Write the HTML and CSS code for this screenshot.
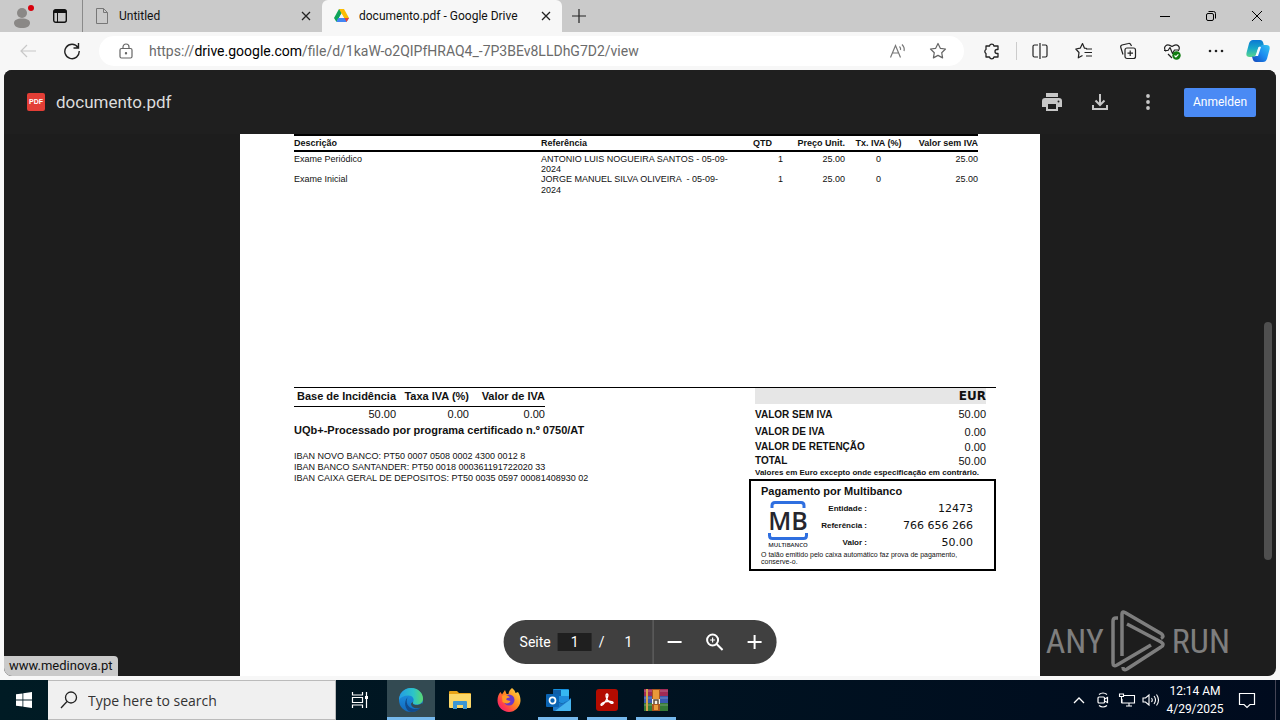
FILE: index.html
```html
<!DOCTYPE html>
<html lang="en">
<head>
  <meta charset="UTF-8">
  <meta name="viewport" content="width=device-width, initial-scale=1.0">
  <title>documento.pdf - Google Drive</title>
  <link rel="stylesheet" href="styles.css">
</head>
<body>
  <header class="tabs">
    <button class="profile" aria-label="Profile"><svg width="24" height="28" viewBox="0 0 24 28"><circle cx="12" cy="11" r="5" fill="#8a8886"/><path d="M4 21c0-3 3-4.500 8-4.500s8 1.500 8 4.500-3 5-8 5-8-2-8-5z" fill="#8a8886"/><circle cx="21" cy="6" r="3" fill="#d8000c"/></svg></button>
    <button class="tab-actions" aria-label="Tab actions"><svg width="16" height="16" viewBox="0 0 16 16"><rect x="1.700" y="1.700" width="12.600" height="12.600" rx="2" fill="none" stroke="#111" stroke-width="1.400"/><path d="M1.700 5V3.500a2 2 0 0 1 2-2h8.600a2 2 0 0 1 2 2V5z" fill="#111"/><path d="M5.500 5v9" stroke="#111"/></svg></button>
    <div class="tab">
      <svg width="14" height="16" viewBox="0 0 14 16" fill="none" stroke="#777"><path d="M1.500 .5h7l4 4v11h-11z M8.500 .5v4h4"/></svg>
      <span>Untitled</span>
      <button class="close" aria-label="Close tab"><svg width="10" height="10" viewBox="0 0 10 10" stroke="#222" stroke-width="1.300"><path d="M1 1l8 8M9 1L1 9"/></svg></button>
    </div>
    <div class="tab active">
      <svg width="15" height="14" viewBox="0 0 15 14"><path d="M5 0h5L5 9l-2.500 4L0 9z" fill="#0fa45a"/><path d="M5 0h5l5 9h-5z" fill="#fbbc04"/><path d="M4 9h11l-2.500 4h-10z" fill="#4285f4"/><path d="M10.500 9H15l-2.500 4z" fill="#ea4335"/><path d="M7.500 4.500L10 9H5z" fill="#f7f7f7"/></svg>
      <span>documento.pdf - Google Drive</span>
      <button class="close" aria-label="Close tab"><svg width="10" height="10" viewBox="0 0 10 10" stroke="#222" stroke-width="1.300"><path d="M1 1l8 8M9 1L1 9"/></svg></button>
    </div>
    <button class="new-tab" aria-label="New tab"><svg width="14" height="14" viewBox="0 0 14 14" stroke="#222" stroke-width="1.200"><path d="M7 0v14M0 7h14"/></svg></button>
    <div class="window-buttons">
      <button aria-label="Minimize"><svg width="12" height="12" viewBox="0 0 12 12"><path d="M1 6.500h10" stroke="#000"/></svg></button>
      <button aria-label="Restore"><svg width="12" height="12" viewBox="0 0 12 12" fill="none" stroke="#000"><rect x="1.500" y="3.500" width="7" height="7" rx="1.500"/><path d="M3.500 1.500h5a2 2 0 0 1 2 2v5"/></svg></button>
      <button aria-label="Close"><svg width="12" height="12" viewBox="0 0 12 12" stroke="#000"><path d="M1 1l10 10M11 1L1 11"/></svg></button>
    </div>
  </header>

  <nav class="toolbar">
    <button class="tool" aria-label="Back"><svg width="18" height="16" viewBox="0 0 18 16" fill="none" stroke="#c8c8c8" stroke-width="1.200"><path d="M17 8H2M8 2L2 8l6 6"/></svg></button>
    <button class="tool" aria-label="Refresh"><svg width="18" height="18" viewBox="0 0 18 18" fill="none" stroke="#222" stroke-width="1.400"><path d="M15 5.500A7.200 7.200 0 1 0 16.200 9M15.500 1v5h-5"/></svg></button>
    <div class="address">
      <svg width="14" height="16" viewBox="0 0 14 16" fill="none" stroke="#666" stroke-width="1.200"><rect x="1" y="5.500" width="12" height="9.500" rx="1.500"/><path d="M4 5.500V4a3 3 0 0 1 6 0v1.500"/><circle cx="7" cy="10.200" r=".6" fill="#666"/></svg>
      <a class="url" href="#">https://<b>drive.google.com</b>/file/d/1kaW-o2QIPfHRAQ4_-7P3BEv8LLDhG7D2/view</a>
      <button aria-label="Read aloud"><svg width="18" height="16" viewBox="0 0 18 16" fill="none" stroke="#777" stroke-width="1.200"><path d="M1.500 14.500l5-12 5 12M3.500 10h6M10.500 3.500q1.500 1.500 1 3.500M13 1.500q3 3 2 6.500"/></svg></button>
      <button aria-label="Add to favorites"><svg width="18" height="18" viewBox="0 0 18 18" fill="none" stroke="#666" stroke-width="1.200"><path d="M9 1.500l2.300 4.800 5.200.7-3.800 3.700.9 5.200L9 13.400l-4.600 2.500.9-5.200L1.500 7l5.200-.7z" stroke-linejoin="round"/></svg></button>
    </div>
    <button class="tool" aria-label="Extensions"><svg width="18" height="18" viewBox="0 0 18 18" fill="none" stroke="#222" stroke-width="1.300"><path d="M3 4h3.500a2.300 2.300 0 0 1 4.500 0h4v3.500h-1a2 2 0 0 0 0 4h1V15h-4a2.300 2.300 0 0 1-4.500 0H3v-3.500a2.300 2.300 0 0 1 0-4z" stroke-linejoin="round"/></svg></button>
    <i class="divider"></i>
    <button class="tool" aria-label="Split screen"><svg width="18" height="18" viewBox="0 0 18 18" fill="none" stroke="#222" stroke-width="1.200"><path d="M7 3H3.500A1.500 1.500 0 0 0 2 4.500v9A1.500 1.500 0 0 0 3.500 15H7M11 3h3.500A1.500 1.500 0 0 1 16 4.500v9a1.500 1.500 0 0 1-1.500 1.500H11M9 1v16"/></svg></button>
    <button class="tool" aria-label="Favorites"><svg width="18" height="18" viewBox="0 0 18 18" fill="none" stroke="#222" stroke-width="1.200"><path d="M12 6.500l-2.500-.3L7.500 1.500 5.200 6.200.8 7l3.200 3.500-.7 5.300 4.200-2.300M11 7h6M9.500 10.500H17M11 14h6" stroke-linejoin="round"/></svg></button>
    <button class="tool" aria-label="Collections"><svg width="18" height="18" viewBox="0 0 18 18" fill="none" stroke="#222" stroke-width="1.200"><rect x="6" y="6" width="10.500" height="10.500" rx="2"/><path d="M11.200 8.500v5.500M8.500 11.200H14M4 12.500L1.800 5.500A2 2 0 0 1 3 3l6.500-1.500A2 2 0 0 1 12 3l.5 1"/></svg></button>
    <button class="tool" aria-label="Browser essentials"><svg width="18" height="18" viewBox="0 0 18 18" fill="none" stroke="#222" stroke-width="1.200"><path d="M3 9.500C-.5 5 3.500.5 9 4.500c5.500-4 9 .5 6.200 4.500M5 12l4 4M1 8.500h4l2-3 2.500 6 2-3.500H15" stroke-linejoin="round"/><circle cx="13.500" cy="13.500" r="4.200" fill="#107c10" stroke="none"/><path d="M11.500 13.500l1.400 1.400 2.500-2.600" stroke="#fff"/></svg></button>
    <button class="tool" aria-label="Settings and more"><svg width="16" height="4" viewBox="0 0 16 4" fill="#222"><circle cx="2" cy="2" r="1.300"/><circle cx="8" cy="2" r="1.300"/><circle cx="14" cy="2" r="1.300"/></svg></button>
    <button class="tool copilot" aria-label="Copilot"><svg width="24" height="24" viewBox="0 0 24 24"><defs><linearGradient id="cpA" x1="0" y1="0" x2="0" y2="1"><stop offset="0" stop-color="#0a78d4"/><stop offset=".5" stop-color="#18a8c8"/><stop offset="1" stop-color="#5ad68c"/></linearGradient><linearGradient id="cpB" x1="1" y1="0" x2="0" y2="1"><stop offset="0" stop-color="#35c5f0"/><stop offset=".5" stop-color="#1a8af0"/><stop offset="1" stop-color="#1545b8"/></linearGradient></defs><path d="M7 1h7q2.500 0 3.300 3L18 7h-3q-2 0-3 3l-1.500 5Q9.500 18 7 18H3.500Q-.5 18 .6 13.500L3 4.500Q4 1 7 1z" fill="url(#cpA)"/><path d="M17 6h3.500q4 0 3 4.500l-2.400 9Q20 23 17 23h-7q-2.500 0-3.300-3L6 17.500h2q2.500 0 3.500-3L13 9.500Q14 6 17 6z" fill="url(#cpB)"/><path d="M12.500 8h2.500l-3 9H9.500z" fill="#f4faff"/></svg></button>
  </nav>

  <main class="viewer">
    <div class="viewer-head">
      <span class="pdf-badge">PDF</span>
      <h1>documento.pdf</h1>
      <button aria-label="Drucken"><svg width="20" height="18" viewBox="0 0 20 18"><path d="M4 0h12v4H4zM3 5h14a3 3 0 0 1 3 3v6h-4v4H4v-4H0V8a3 3 0 0 1 3-3z" fill="#c7c7c7"/><path d="M6 11h8v5H6z" fill="#1f1f1f"/><circle cx="16.500" cy="8.500" r="1" fill="#1f1f1f"/></svg></button>
      <button aria-label="Herunterladen"><svg width="16" height="16" viewBox="0 0 16 16" fill="none" stroke="#c7c7c7" stroke-width="2"><path d="M8 0v11M3.500 6.500L8 11l4.500-4.500M1 11v4h14v-4"/></svg></button>
      <button aria-label="Mehr"><svg width="4" height="16" viewBox="0 0 4 16" fill="#c7c7c7"><circle cx="2" cy="2" r="1.900"/><circle cx="2" cy="8" r="1.900"/><circle cx="2" cy="14" r="1.900"/></svg></button>
      <a class="sign-in" href="#">Anmelden</a>
    </div>

    <article class="page">
      <table class="items">
        <thead>
          <tr><th class="desc">Descrição</th><th class="ref">Referência</th><th class="qty">QTD</th><th class="price">Preço Unit.</th><th class="rate">Tx. IVA (%)</th><th class="total">Valor sem IVA</th></tr>
        </thead>
        <tbody>
          <tr><td>Exame Periódico</td><td>ANTONIO LUIS NOGUEIRA SANTOS - 05-09-<br>2024</td><td class="qty">1</td><td class="price">25.00</td><td class="rate">0</td><td class="total">25.00</td></tr>
          <tr><td>Exame Inicial</td><td>JORGE MANUEL SILVA OLIVEIRA &nbsp;- 05-09-<br>2024</td><td class="qty">1</td><td class="price">25.00</td><td class="rate">0</td><td class="total">25.00</td></tr>
        </tbody>
      </table>

      <section class="summary">
        <div class="left">
          <table class="vat">
            <thead><tr><th class="base">Base de Incidência</th><th class="tax">Taxa IVA (%)</th><th>Valor de IVA</th></tr></thead>
            <tbody><tr><td>50.00</td><td>0.00</td><td>0.00</td></tr></tbody>
          </table>
          <p class="certified">UQb+-Processado por programa certificado n.º 0750/AT</p>
          <p class="iban">IBAN NOVO BANCO: PT50 0007 0508 0002 4300 0012 8<br>IBAN BANCO SANTANDER: PT50 0018 000361191722020 33<br>IBAN CAIXA GERAL DE DEPOSITOS: PT50 0035 0597 00081408930 02</p>
        </div>
        <div class="right">
          <table class="totals">
            <thead><tr><th colspan="2">EUR</th></tr></thead>
            <tbody>
              <tr><th>VALOR SEM IVA</th><td>50.00</td></tr>
              <tr><th>VALOR DE IVA</th><td>0.00</td></tr>
              <tr><th>VALOR DE RETENÇÃO</th><td>0.00</td></tr>
              <tr><th>TOTAL</th><td>50.00</td></tr>
            </tbody>
          </table>
          <p class="note">Valores em Euro excepto onde especificação em contrário.</p>
          <div class="payment">
            <h2>Pagamento por Multibanco</h2>
            <div class="payment-body">
              <div class="mb">
                <svg width="40" height="7" viewBox="0 0 40 7" fill="none" stroke="#2f6fe0" stroke-width="3"><path d="M4 7V4.500q0-3 3-3h26q3 0 3 3V7"/></svg>
                <b>MB</b>
                <svg width="40" height="7" viewBox="0 0 40 7" fill="none" stroke="#2f6fe0" stroke-width="3"><path d="M1.500 0v2.500q0 3 3 3h31q3 0 3-3V0"/></svg>
                <small>MULTIBANCO</small>
              </div>
              <dl>
                <dt>Entidade :</dt><dd>12473</dd>
                <dt>Referência :</dt><dd>766 656 266</dd>
                <dt>Valor :</dt><dd>50.00</dd>
              </dl>
            </div>
            <p class="receipt">O talão emitido pelo caixa automático faz prova de pagamento,<br>conserve-o.</p>
          </div>
        </div>
      </section>
    </article>

    <i class="scroll-thumb"></i>

    <div class="pager">
      <label for="pageno">Seite</label>
      <input id="pageno" type="text" value="1">
      <span>/</span><span class="count">1</span>
      <i></i>
      <button aria-label="Verkleinern"><svg width="16" height="16" viewBox="0 0 16 16" stroke="#fff" stroke-width="2"><path d="M1 8h14"/></svg></button>
      <button aria-label="Zoom"><svg width="18" height="18" viewBox="0 0 18 18" fill="none" stroke="#fff" stroke-width="2"><circle cx="7" cy="7" r="5.500"/><path d="M11 11l6 6"/><path d="M7 4.500v5M4.500 7h5" stroke-width="1.200"/></svg></button>
      <button aria-label="Vergrößern"><svg width="16" height="16" viewBox="0 0 16 16" stroke="#fff" stroke-width="2"><path d="M1 8h14M8 1v14"/></svg></button>
    </div>

    <div class="status">www.medinova.pt</div>

    <div class="watermark">
      <span>ANY</span>
      <svg width="56" height="62" viewBox="0 0 56 62" fill="none" stroke="currentColor" stroke-width="3.500" stroke-linejoin="round"><path d="M8 8H6q-3 0-3 3v42q0 4 4 2l34-20M12 46V4q0-3 3-1.500l36 21q4 3 0 5M17 14l34 18q4 3 0 5L17 59q-4 2-4-2"/></svg>
      <span>RUN</span>
    </div>
  </main>

  <footer class="taskbar">
    <button class="start" aria-label="Start"><svg width="16" height="16" viewBox="0 0 16 16" fill="#fff"><path d="M0 2.300l6.500-.9v6.200H0zM7.300 1.300L16 0v7.600H7.300zM0 8.400h6.500v6.200L0 13.700zM7.300 8.400H16V16l-8.700-1.300z"/></svg></button>
    <label class="search"><svg width="18" height="18" viewBox="0 0 18 18" fill="none" stroke="#222" stroke-width="1.300"><circle cx="11" cy="6.500" r="5.500"/><path d="M7 10.500L1 17"/></svg><input type="text" placeholder="Type here to search"></label>
    <button class="start task-view" aria-label="Task View"><svg width="18" height="18" viewBox="0 0 18 18" fill="none" stroke="#fff" stroke-width="1.200"><path d="M1.500 1v3h10V1M1.500 17v-3h10v3M1.500 6.500h10v5h-10zM15.500 1v16"/><path d="M14 5h3v3h-3z" fill="#fff" stroke="none"/></svg></button>
    <div class="apps">
      <button class="focused" aria-label="Edge"><svg width="24" height="24" viewBox="0 0 24 24"><defs><linearGradient id="edA" x1="0" y1="0" x2="1" y2="0"><stop offset="0" stop-color="#239be5"/><stop offset=".6" stop-color="#2cc4c8"/><stop offset="1" stop-color="#5ad870"/></linearGradient><linearGradient id="edB" x1="0" y1="0" x2="0" y2="1"><stop offset="0" stop-color="#1f9ae8"/><stop offset="1" stop-color="#1269bd"/></linearGradient></defs><circle cx="12" cy="12" r="12" fill="url(#edB)"/><path d="M0 11C1 4 6 0 12 0c7 0 12 5 12 10.500 0 4-3 6-6.500 6-3 0-4.500-1-3.500-2.500 2-3-.5-6.500-4.500-6.500C5 7.500 1.500 9 0 12z" fill="url(#edA)"/><path d="M9 9c-3 4-1 11 6 12 3 .4 5-.5 7-2-2 3-5.500 5-10 5C6 23 4 13 9 9z" fill="#124c8d"/><path d="M14.500 13.500c-1.500 2 0 3.500 3 3.500 2 0 4-.5 5.500-2l1 2-2 2.500c-5 2-10 0-10-4z" fill="#344a52"/></svg></button>
      <button aria-label="File Explorer"><svg width="22" height="20" viewBox="0 0 22 20"><path d="M0 2q0-1 1-1h7l2 2h11q1 0 1 1v4H0z" fill="#e8a317"/><path d="M0 4h22v13q0 1-1 1H1q-1 0-1-1z" fill="#fbd768"/><path d="M4 12q0-1 1-1h12q1 0 1 1v7h-4v-4H8v4H4z" fill="#3c96d4"/></svg></button>
      <button aria-label="Firefox"><svg width="24" height="24" viewBox="0 0 24 24"><defs><linearGradient id="fx" x1="1" y1="0" x2="0" y2="1"><stop offset="0" stop-color="#ffe34c"/><stop offset=".45" stop-color="#ff8a1e"/><stop offset=".75" stop-color="#ff3750"/><stop offset="1" stop-color="#e01890"/></linearGradient></defs><path d="M15 0c2 1.500 3 3 3.500 5L21 4c2 3 2.500 6 2.500 9C23 19 18 24 12 24S.5 19 .5 12.500C.5 9 1.500 6 3.500 4L5 6.500 8 2l1.500 4h2C12 3 13 1.500 15 0z" fill="url(#fx)"/><circle cx="12" cy="12" r="5.500" fill="#6a38c8"/><path d="M5 8c3-2 6-1 8 1.500-3 0-4 1-3.500 2.500l4 1c-1 3-5 3-8 1z" fill="#ff9a24"/></svg></button>
      <button class="open" aria-label="Outlook"><svg width="25" height="22" viewBox="0 0 25 22"><path d="M8 0h14q1 0 1 1v11H7V1q0-1 1-1z" fill="#1490df"/><path d="M7 1h8v6H7z" fill="#0f5fa8"/><path d="M15 1h8v6h-8z" fill="#35b8f1"/><path d="M7 9l9 6 9-6v12q0 1-1 1H8q-1 0-1-1z" fill="#1c78ca"/><path d="M25 10v11q0 1-1 1H9z" fill="#47b5ef"/><path d="M15 7h8v4l-7 4-3-2V7z" fill="#1f8ddb"/><rect y="5" width="13" height="13" rx="1" fill="#0a64b4"/><ellipse cx="6.500" cy="11.500" rx="3" ry="3.200" fill="none" stroke="#fff" stroke-width="1.700"/></svg></button>
      <button class="open" aria-label="Acrobat"><svg width="22" height="22" viewBox="0 0 22 22"><rect width="22" height="22" rx="3" fill="#b30b00"/><path d="M11 5c1.500 0 1 3-1 6.500S5.500 17 5 16s2-2.800 6-3.500 6.500.5 6 1.500-4-.5-5.500-3S9.500 5 11 5z" fill="none" stroke="#fff" stroke-width="1.400"/></svg></button>
      <button class="open" aria-label="WinRAR"><svg width="24" height="22" viewBox="0 0 24 22"><path d="M0 0h24v7H0z" fill="#a02a55"/><path d="M0 7h24v7H0z" fill="#3859b0"/><path d="M0 14h24v8H0z" fill="#357a37"/><path d="M0 2h24M0 9h24M0 16h24" stroke="#ffffff" stroke-opacity=".3"/><path d="M3 0v22" stroke="#d4a44c" stroke-width="2"/><path d="M8 0h8v22H8z" fill="#a9561e"/><path d="M9 1h6v9H9zM10 16h4v5h-4z" fill="#e89a3a"/><path d="M8 10h8v5H8z" fill="#f4f0e6"/><path d="M10 15v-4h4v4" fill="none" stroke="#5b4a3a" stroke-width="1.500"/></svg></button>
    </div>
    <div class="tray">
      <button aria-label="Show hidden icons"><svg width="12" height="8" viewBox="0 0 12 8" fill="none" stroke="#fff" stroke-width="1.300"><path d="M1 7l5-5 5 5"/></svg></button>
      <button aria-label="Meet Now"><svg width="14" height="16" viewBox="0 0 14 16" fill="none" stroke="#fff" stroke-width="1.200"><rect x="2" y="5" width="6.500" height="6" rx="1"/><path d="M8.500 7l3-1.500v5L8.500 9M3 2.500q4-3 8 0M3 13.500q4 3 8 0"/></svg></button>
      <button aria-label="Network"><svg width="18" height="14" viewBox="0 0 18 14" fill="none" stroke="#fff" stroke-width="1.100"><path d="M6 2.500h10.500v7.500H4V6M8 13h6M11 10v3M1.500 1v2.500h4V1zM3.500 3.500V10"/></svg></button>
      <button aria-label="Volume"><svg width="18" height="14" viewBox="0 0 18 14" fill="none" stroke="#fff" stroke-width="1.100"><path d="M1 5v4h2.500L7 12V2L3.500 5zM9.500 5q1.500 2 0 4M12 3q3 4 0 8M14.500 1.500q4 5.500 0 11"/></svg></button>
      <time>12:14 AM<br>4/29/2025</time>
      <button class="notify" aria-label="Notifications"><svg width="18" height="18" viewBox="0 0 18 18" fill="none" stroke="#fff" stroke-width="1.200"><path d="M1.500 2.500h15v11H12l-3 3-3-3H1.500z"/></svg></button>
    </div>
  </footer>
</body>
</html>
```

FILE: styles.css
```css
* { box-sizing: border-box; }
body { margin: 0; height: 100vh; display: flex; flex-direction: column; overflow: hidden; background: #f7f7f7; font-family: "Open Sans", "Noto Sans", sans-serif; }
button { border: none; background: none; padding: 0; margin: 0; display: flex; align-items: center; justify-content: center; }
svg { flex: none; display: block; }
p, h1, h2, dl, dd { margin: 0; }
table { border-collapse: collapse; }
th, td { padding: 0; }

/* tab strip */
.tabs { flex: none; height: 32px; display: flex; align-items: stretch; background: #cacaca; font: 12px Roboto, sans-serif; color: #111; }
.profile { width: 44px; }
.tab-actions { width: 32px; margin-right: 6px; }
.tab { width: 240px; padding: 0 11px 0 12px; display: flex; align-items: center; gap: 10px; border-left: 1px solid #8a8a8a; }
.tab span { flex: 1; white-space: nowrap; }
.tab.active { background: #f7f7f7; border: none; border-radius: 6px 6px 0 0; }
.new-tab { width: 34px; }
.window-buttons { margin-left: auto; display: flex; }
.window-buttons button { width: 46px; }

/* toolbar */
.toolbar { flex: none; height: 38px; padding: 0 2px 0 6px; display: flex; align-items: center; }
.tool { width: 44px; height: 38px; flex: none; }
.tool.copilot { width: 40px; }
.address { flex: 1; height: 30px; margin: 0 6px 0 5px; padding: 0 6px 0 20px; display: flex; align-items: center; background: #fff; border-radius: 15px; }
.address button { width: 40px; height: 30px; }
.url { flex: 1; margin-left: 16px; font: 14px Roboto, sans-serif; color: #6b6b6b; text-decoration: none; white-space: nowrap; }
.url b { font-weight: 400; color: #000; }
.divider { width: 1px; height: 18px; margin: 0 1px 0 2px; background: #ccc; }

/* document viewer */
.viewer { position: relative; flex: 1; min-height: 0; margin: 0 4px 4px; display: flex; flex-direction: column; overflow: hidden; background: #1d1d1d; border-radius: 8px; }
.viewer-head { flex: none; height: 64px; padding: 0 20px 0 23px; display: flex; align-items: center; background: #1f1f1f; color: #dcdcdc; }
.viewer-head h1 { flex: 1; margin-left: 11px; font: 17px Roboto, sans-serif; }
.viewer-head button { width: 48px; height: 40px; }
.pdf-badge { width: 18px; height: 18px; border-radius: 2px; background: #e33e36; color: #fff; font: bold 7px/18px "Liberation Sans", sans-serif; text-align: center; }
.sign-in { width: 72px; margin-left: 12px; border-radius: 2px; background: #4a8af4; color: #fff; font: 12px/29px Roboto, sans-serif; text-align: center; text-decoration: none; }

.page { flex: 1; width: 800px; max-width: 100%; margin: 0 auto; padding: 0 44px 0 54px; background: #fff; color: #111; font-family: "Liberation Sans", Arial, sans-serif; }
.items { width: 684px; border-top: 2px solid #000; table-layout: fixed; font-size: 9px; line-height: 11px; text-align: left; }
.items thead tr { border-bottom: 2px solid #000; }
.items th { height: 16px; }
.items td { vertical-align: top; }
.items tbody tr:first-child td { padding-top: 2px; line-height: 10px; height: 21px; }
.items .desc { width: 247px; }
.items .ref { width: 204px; }
.items .qty { width: 38px; text-align: right; }
.items th.qty { padding-right: 11px; }
.items .price { width: 62px; text-align: right; }
.items .rate { width: 67px; text-align: center; }
.items .total { text-align: right; }

.summary { margin-top: 191px; display: flex; justify-content: space-between; border-top: 1px solid #000; }
.vat { width: 251px; table-layout: fixed; font-size: 11px; text-align: right; white-space: nowrap; }
.vat thead tr { border-bottom: 1px solid #000; }
.vat th { height: 18px; padding-bottom: 2px; }
.vat td { height: 15px; }
.vat .base { width: 102px; }
.vat .tax { width: 73px; }
.certified { margin-top: 3px; font-size: 11px; line-height: 12px; font-weight: bold; }
.iban { margin-top: 15px; font-size: 9px; line-height: 11px; }
.right { width: 247px; }
.totals { width: 231px; margin-left: 6px; font-size: 10px; }
.totals th { height: 15px; text-align: left; }
.totals thead th { height: 16px; background: #e6e6e6; font: bold 12px "DejaVu Sans", sans-serif; text-align: right; }
.totals td { font-size: 11px; text-align: right; }
.totals tbody tr:first-child th { height: 20px; }
.totals tbody tr:last-child th { height: 13px; }
.note { margin: 1px 0 1px 6px; font-size: 8px; line-height: 10px; font-weight: bold; white-space: nowrap; }
.payment { padding: 3px 10px 4px; border: 2px solid #000; }
.payment h2 { font-size: 11px; line-height: 14px; }
.payment-body { display: flex; gap: 10px; padding-left: 6px; }
.mb { width: 42px; display: flex; flex-direction: column; align-items: center; padding-top: 3px; }
.mb b { font: 600 25px/25px "Open Sans", sans-serif; color: #26262e; }
.mb small { font: 600 6px/11px "Open Sans", sans-serif; color: #26262e; }
.payment dl { flex: 1; padding: 2px 11px 0 0; display: grid; grid-template-columns: 48px 1fr; grid-auto-rows: 17px; align-items: center; text-align: right; }
.payment dt { font-size: 8px; font-weight: bold; white-space: nowrap; }
.payment dd { font: 11px "DejaVu Sans", sans-serif; }
.receipt { font-size: 7px; line-height: 7px; white-space: nowrap; }

.scroll-thumb { position: absolute; right: 4px; top: 252px; width: 8px; height: 238px; border-radius: 4px; background: #4f4f4f; }
.pager { position: absolute; left: 50%; bottom: 12px; transform: translateX(-50%); height: 44px; padding: 0 2px 0 16px; display: flex; align-items: center; border-radius: 22px; background: #404040; color: #fff; font: 14px Roboto, sans-serif; }
.pager input { width: 34px; height: 18px; margin: 0 7px; padding: 0; border: none; background: #1f1f1f; color: #fff; font: inherit; text-align: center; }
.pager .count { margin: 0 20px; }
.pager i { width: 1px; height: 44px; margin-right: 1px; background: #6a6a6a; }
.pager button { width: 40px; height: 44px; }
.status { position: absolute; left: 0; bottom: 0; height: 20px; padding: 0 5px; border-radius: 0 4px 0 6px; background: #cacaca; color: #111; font: 13px/20px Roboto, sans-serif; }
.watermark { position: absolute; right: 46px; bottom: 4px; display: flex; align-items: center; gap: 6px; color: #7e7e7e; font: 34px "Roboto Condensed", "Open Sans Condensed", "DejaVu Sans Condensed", sans-serif; }

/* taskbar */
.taskbar { flex: none; height: 40px; display: flex; background: linear-gradient(90deg, #001b24, #000b1e); color: #fff; }
.start { width: 48px; }
.search { width: 288px; padding-left: 12px; display: flex; align-items: center; gap: 10px; background: #f0f0f0; border: 1px solid #bbb; border-width: 1px 1px 1px 0; }
.search input { flex: 1; min-width: 0; padding: 0; border: none; background: none; font: 14px "Open Sans", sans-serif; }
.search input::placeholder { color: #333; }
.task-view { margin-right: 3px; }
.apps { display: flex; gap: 1px; }
.apps button { width: 48px; }
.apps .focused { background: #334a52; border-bottom: 3px solid #76b9ed; padding-top: 3px; }
.apps .open { background: linear-gradient(#76b9ed, #76b9ed) center bottom / 40px 3px no-repeat; }
.tray { margin-left: auto; padding-right: 4px; display: flex; align-items: center; }
.tray button { width: 24px; height: 40px; }
.tray time { width: 64px; font: 12px/18px Roboto, sans-serif; text-align: center; white-space: nowrap; }
.tray .notify { width: 49px; padding-right: 8px; border-right: 1px solid #445; }
```
